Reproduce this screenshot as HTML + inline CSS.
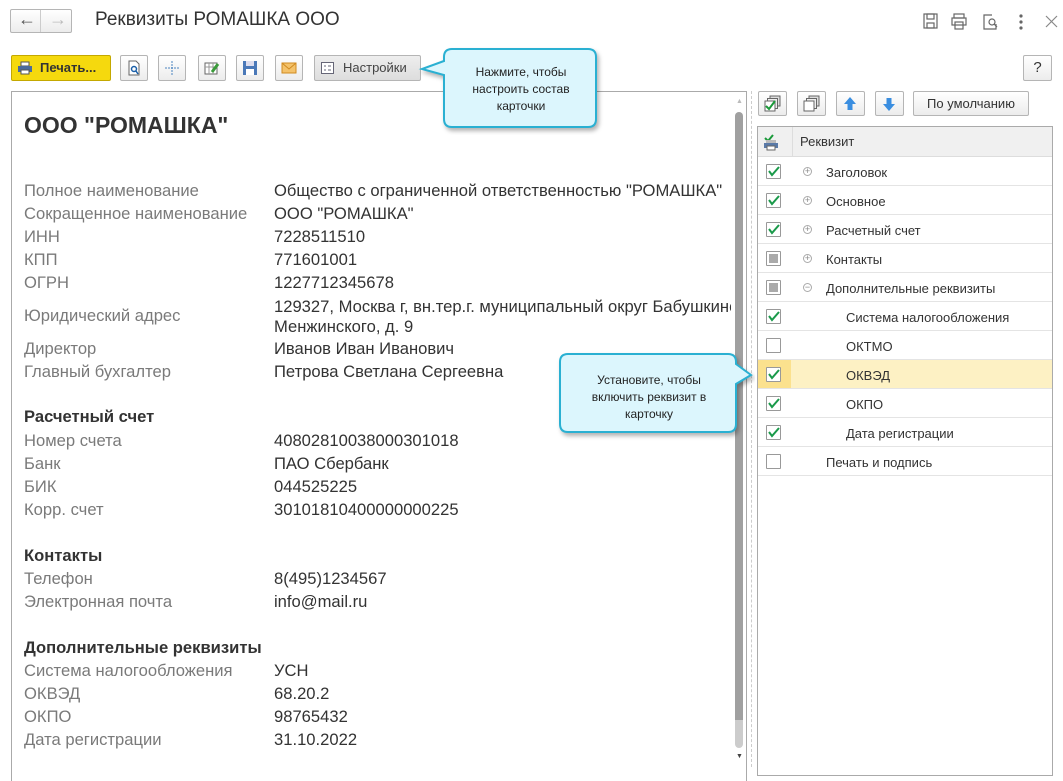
<!DOCTYPE html>
<html><head><meta charset="utf-8"><style>
*{box-sizing:border-box;margin:0;padding:0}
body{width:1063px;height:767px;background:#fff;font-family:"Liberation Sans",Arial,sans-serif;position:relative;overflow:hidden;color:#333}
.a{position:absolute}
.btn{position:absolute;border:1px solid #b5b5b5;border-radius:2px;background:linear-gradient(#fff,#ececec);height:25px}
.l{position:absolute;left:24px;font-size:16.6px;color:#7a7a7a;line-height:20px}
.v{position:absolute;left:274px;font-size:16.6px;color:#333;line-height:20px;white-space:nowrap}
.h{position:absolute;left:24px;font-size:16.6px;font-weight:bold;color:#333;line-height:20px}
.row{position:absolute;left:758px;width:294px;height:29px;border-bottom:1px solid #e4e4e4;font-size:13px;color:#333}
.cb{position:absolute;left:8px;top:7px;width:15px;height:15px;border:1px solid #999;background:#fff;border-radius:1px}
.cb.g::after{content:"";position:absolute;left:2px;top:2px;width:9px;height:9px;background:#aaa}
.rt{position:absolute;top:8px;line-height:16px}
.pl{position:absolute;left:45px;top:10px;width:9px;height:9px;border:1px solid #aaa;border-radius:50%;font-size:9px;line-height:7px;text-align:center;color:#888}
</style></head><body>
<div class="btn" style="left:10px;top:9px;width:62px;height:24px"></div>
<div class="a" style="left:40px;top:10px;width:1px;height:22px;background:#ccc"></div>
<div class="a" style="left:18px;top:9px;font-size:18px;color:#555">&#8592;</div>
<div class="a" style="left:49px;top:9px;font-size:18px;color:#bbb">&#8594;</div>
<div class="a" style="left:95px;top:9px;font-size:19px;color:#333">Реквизиты РОМАШКА ООО</div>
<svg class="a" style="left:922px;top:12px" width="140" height="20" viewBox="0 0 140 20" fill="none" stroke="#666" stroke-width="1.2">
<rect x="2" y="2" width="13" height="14"/><rect x="5" y="2" width="7" height="5"/><rect x="5" y="11" width="7" height="5"/>
<rect x="32" y="2" width="10" height="4"/><rect x="30" y="6" width="14" height="7"/><rect x="33" y="10" width="8" height="7"/>
<path d="M70 3H62V17H74V12"/><circle cx="70" cy="10" r="3"/><path d="M72 12L75 15"/>
<circle cx="99" cy="4" r="1" fill="#666"/><circle cx="99" cy="10" r="1" fill="#666"/><circle cx="99" cy="16" r="1" fill="#666"/>
<path d="M124 4L135 15M135 4L124 15" stroke="#888"/>
</svg>
<div class="a" style="left:11px;top:55px;width:100px;height:26px;background:#f5d90e;border:1px solid #c4a800;border-radius:2px;font-size:13px;font-weight:bold;color:#333;line-height:24px;padding-left:28px">Печать...</div>
<svg class="a" style="left:17px;top:61px" width="16" height="14"><rect x="4" y="1" width="8" height="4" fill="#fff" stroke="#555"/><rect x="1" y="5" width="14" height="6" fill="#4a6a9c"/><rect x="4" y="9" width="8" height="4" fill="#fff" stroke="#555"/></svg>
<div class="btn" style="left:120px;top:55px;width:28px;height:26px"></div>
<svg class="a" style="left:126px;top:60px" width="16" height="16"><path d="M3 1H10L13 4V15H3Z" fill="#fff" stroke="#666"/><circle cx="8" cy="9" r="2.5" fill="none" stroke="#1a5fa8" stroke-width="1.5"/><path d="M10 11L12 14" stroke="#1a5fa8" stroke-width="1.5"/></svg>
<div class="btn" style="left:158px;top:55px;width:28px;height:26px"></div>
<svg class="a" style="left:164px;top:60px" width="16" height="16"><path d="M8 1V15M1 8H15" stroke="#4a84c0" stroke-dasharray="2 1"/></svg>
<div class="btn" style="left:198px;top:55px;width:28px;height:26px"></div>
<svg class="a" style="left:204px;top:60px" width="16" height="16"><rect x="1" y="3" width="12" height="11" fill="#fff" stroke="#666"/><path d="M1 7H13M5 3V14M9 3V14" stroke="#999"/><path d="M8 12L14 4" stroke="#3a9a3a" stroke-width="3"/></svg>
<div class="btn" style="left:236px;top:55px;width:28px;height:26px"></div>
<svg class="a" style="left:242px;top:60px" width="16" height="16"><rect x="1" y="1" width="14" height="14" fill="#4a78b8"/><rect x="4" y="1" width="8" height="5" fill="#dde"/><rect x="4" y="9" width="8" height="6" fill="#fff"/></svg>
<div class="btn" style="left:275px;top:55px;width:28px;height:26px"></div>
<svg class="a" style="left:281px;top:61px" width="16" height="14"><rect x="1" y="2" width="14" height="10" fill="#f4c26a" stroke="#d08a20"/><path d="M1 2L8 8L15 2" fill="none" stroke="#d08a20"/></svg>
<div class="btn" style="left:314px;top:55px;width:107px;height:26px;background:linear-gradient(#eee,#ddd);font-size:13px;color:#444;line-height:24px;padding-left:28px">Настройки</div>
<svg class="a" style="left:321px;top:62px" width="14" height="12"><rect x="0.5" y="0.5" width="12" height="11" fill="#fff" stroke="#667"/><path d="M3 4H5M7 4H10M3 8H5M7 8H10" stroke="#667"/></svg>
<div class="btn" style="left:1023px;top:55px;width:29px;height:26px;font-size:15px;text-align:center;line-height:24px;color:#333">?</div>
<div class="a" style="left:11px;top:91px;width:736px;height:690px;border:1px solid #aaa;border-bottom:none"></div>
<div class="a" style="left:735px;top:112px;width:8px;height:613px;background:#a0a0a0;border-radius:4px 4px 0 0"></div>
<div class="a" style="left:735px;top:720px;width:8px;height:28px;background:#ccc;border-radius:0 0 4px 4px"></div>
<div class="a" style="left:736px;top:98px;font-size:7px;color:#bbb">▲</div>
<div class="a" style="left:736px;top:753px;font-size:7px;color:#444">▼</div>
<div class="a" style="left:751px;top:91px;height:676px;border-left:1px dashed #ccc"></div>
<div class="a" style="left:24px;top:112px;font-size:23px;font-weight:bold;color:#333">ООО "РОМАШКА"</div>
<div class="l" style="top:181px">Полное наименование</div><div class="v" style="top:181px">Общество с ограниченной ответственностью "РОМАШКА"</div>
<div class="l" style="top:204px">Сокращенное наименование</div><div class="v" style="top:204px">ООО "РОМАШКА"</div>
<div class="l" style="top:227px">ИНН</div><div class="v" style="top:227px">7228511510</div>
<div class="l" style="top:250px">КПП</div><div class="v" style="top:250px">771601001</div>
<div class="l" style="top:273px">ОГРН</div><div class="v" style="top:273px">1227712345678</div>
<div class="l" style="top:306px">Юридический адрес</div><div class="v" style="top:297px;width:457px;overflow:hidden">129327, Москва г, вн.тер.г. муниципальный округ Бабушкинский<br>Менжинского, д. 9</div>
<div class="l" style="top:339px">Директор</div><div class="v" style="top:339px">Иванов Иван Иванович</div>
<div class="l" style="top:362px">Главный бухгалтер</div><div class="v" style="top:362px">Петрова Светлана Сергеевна</div>
<div class="h" style="top:407px">Расчетный счет</div>
<div class="l" style="top:431px">Номер счета</div><div class="v" style="top:431px">40802810038000301018</div>
<div class="l" style="top:454px">Банк</div><div class="v" style="top:454px">ПАО Сбербанк</div>
<div class="l" style="top:477px">БИК</div><div class="v" style="top:477px">044525225</div>
<div class="l" style="top:500px">Корр. счет</div><div class="v" style="top:500px">30101810400000000225</div>
<div class="h" style="top:546px">Контакты</div>
<div class="l" style="top:569px">Телефон</div><div class="v" style="top:569px">8(495)1234567</div>
<div class="l" style="top:592px">Электронная почта</div><div class="v" style="top:592px">info@mail.ru</div>
<div class="h" style="top:638px">Дополнительные реквизиты</div>
<div class="l" style="top:661px">Система налогообложения</div><div class="v" style="top:661px">УСН</div>
<div class="l" style="top:684px">ОКВЭД</div><div class="v" style="top:684px">68.20.2</div>
<div class="l" style="top:707px">ОКПО</div><div class="v" style="top:707px">98765432</div>
<div class="l" style="top:730px">Дата регистрации</div><div class="v" style="top:730px">31.10.2022</div>
<div class="btn" style="left:758px;top:91px;width:29px;height:25px"></div>
<svg class="a" style="left:764px;top:95px" width="18" height="18"><rect x="6" y="1" width="10" height="10" fill="#ddd" stroke="#666"/><rect x="3.5" y="3.5" width="10" height="10" fill="#eee" stroke="#666"/><rect x="1" y="6" width="10" height="10" fill="#fff" stroke="#666"/><path d="M2 11L5 14L11 6" fill="none" stroke="#1a9a3a" stroke-width="2"/></svg>
<div class="btn" style="left:797px;top:91px;width:29px;height:25px"></div>
<svg class="a" style="left:803px;top:95px" width="18" height="18"><rect x="6" y="1" width="10" height="10" fill="#ddd" stroke="#666"/><rect x="3.5" y="3.5" width="10" height="10" fill="#eee" stroke="#666"/><rect x="1" y="6" width="10" height="10" fill="#fff" stroke="#666"/></svg>
<div class="btn" style="left:836px;top:91px;width:29px;height:25px"></div>
<svg class="a" style="left:843px;top:96px" width="14" height="16"><path d="M7 1L13 8H9.5V14H4.5V8H1Z" fill="#3a8ee0"/></svg>
<div class="btn" style="left:875px;top:91px;width:29px;height:25px"></div>
<svg class="a" style="left:882px;top:96px" width="14" height="16"><path d="M7 15L13 8H9.5V2H4.5V8H1Z" fill="#3a8ee0"/></svg>
<div class="btn" style="left:913px;top:91px;width:116px;height:25px;font-size:13px;text-align:center;line-height:23px;color:#333">По умолчанию</div>
<div class="a" style="left:757px;top:126px;width:296px;height:650px;border:1px solid #aaa"></div>
<div class="a" style="left:758px;top:127px;width:294px;height:30px;background:#f0f0f0;border-bottom:1px solid #ddd"></div>
<div class="a" style="left:792px;top:127px;width:1px;height:30px;background:#ddd"></div>
<svg class="a" style="left:763px;top:134px" width="16" height="17"><path d="M2 4L5 7L10 1" fill="none" stroke="#1a9a3a" stroke-width="2"/><rect x="3" y="6" width="10" height="3" fill="#bbb"/><rect x="1" y="9" width="14" height="5" fill="#5a7aa8"/><rect x="4" y="12" width="8" height="4" fill="#fff" stroke="#666"/></svg>
<div class="a" style="left:800px;top:134px;font-size:13px;color:#333">Реквизит</div>
<div class="row" style="top:157px"><div class="cb"></div><svg class="a" style="left:10px;top:9px" width="12" height="11"><path d="M1 5L4 9L11 1" fill="none" stroke="#1a9a4a" stroke-width="2"/></svg><div class="pl">+</div><div class="rt" style="left:68px">Заголовок</div></div>
<div class="row" style="top:186px"><div class="cb"></div><svg class="a" style="left:10px;top:9px" width="12" height="11"><path d="M1 5L4 9L11 1" fill="none" stroke="#1a9a4a" stroke-width="2"/></svg><div class="pl">+</div><div class="rt" style="left:68px">Основное</div></div>
<div class="row" style="top:215px"><div class="cb"></div><svg class="a" style="left:10px;top:9px" width="12" height="11"><path d="M1 5L4 9L11 1" fill="none" stroke="#1a9a4a" stroke-width="2"/></svg><div class="pl">+</div><div class="rt" style="left:68px">Расчетный счет</div></div>
<div class="row" style="top:244px"><div class="cb g"></div><div class="pl">+</div><div class="rt" style="left:68px">Контакты</div></div>
<div class="row" style="top:273px"><div class="cb g"></div><div class="pl">−</div><div class="rt" style="left:68px">Дополнительные реквизиты</div></div>
<div class="row" style="top:302px"><div class="cb"></div><svg class="a" style="left:10px;top:9px" width="12" height="11"><path d="M1 5L4 9L11 1" fill="none" stroke="#1a9a4a" stroke-width="2"/></svg><div class="rt" style="left:88px">Система налогообложения</div></div>
<div class="row" style="top:331px"><div class="cb"></div><div class="rt" style="left:88px">ОКТМО</div></div>
<div class="row" style="top:360px;background:#fdf1c4"><div class="a" style="left:0;top:0;width:33px;height:28px;background:#fbe18e"></div><div class="cb"></div><svg class="a" style="left:10px;top:9px" width="12" height="11"><path d="M1 5L4 9L11 1" fill="none" stroke="#1a9a4a" stroke-width="2"/></svg><div class="rt" style="left:88px">ОКВЭД</div></div>
<div class="row" style="top:389px"><div class="cb"></div><svg class="a" style="left:10px;top:9px" width="12" height="11"><path d="M1 5L4 9L11 1" fill="none" stroke="#1a9a4a" stroke-width="2"/></svg><div class="rt" style="left:88px">ОКПО</div></div>
<div class="row" style="top:418px"><div class="cb"></div><svg class="a" style="left:10px;top:9px" width="12" height="11"><path d="M1 5L4 9L11 1" fill="none" stroke="#1a9a4a" stroke-width="2"/></svg><div class="rt" style="left:88px">Дата регистрации</div></div>
<div class="row" style="top:447px"><div class="cb"></div><div class="rt" style="left:68px">Печать и подпись</div></div>
<svg class="a" style="left:415px;top:45px" width="190" height="90"><path d="M37 4H173Q181 4 181 12V74Q181 82 173 82H37Q29 82 29 74V30L7 24L29 16V12Q29 4 37 4Z" fill="#dcf6fd" stroke="#2ab0d2" stroke-width="2" filter="drop-shadow(2px 3px 2px rgba(0,0,0,.3))"/></svg>
<div class="a" style="left:466px;top:64px;width:110px;text-align:center;font-size:12px;line-height:17px;color:#222">Нажмите, чтобы настроить состав карточки</div>
<svg class="a" style="left:555px;top:350px" width="200" height="92"><path d="M13 4H173Q181 4 181 12V14L196 25L181 34V74Q181 82 173 82H13Q5 82 5 74V12Q5 4 13 4Z" fill="#dcf6fd" stroke="#2ab0d2" stroke-width="2" filter="drop-shadow(2px 3px 2px rgba(0,0,0,.3))"/></svg>
<div class="a" style="left:582px;top:372px;width:134px;text-align:center;font-size:12px;line-height:17px;color:#222">Установите, чтобы включить реквизит в карточку</div>
</body></html>
